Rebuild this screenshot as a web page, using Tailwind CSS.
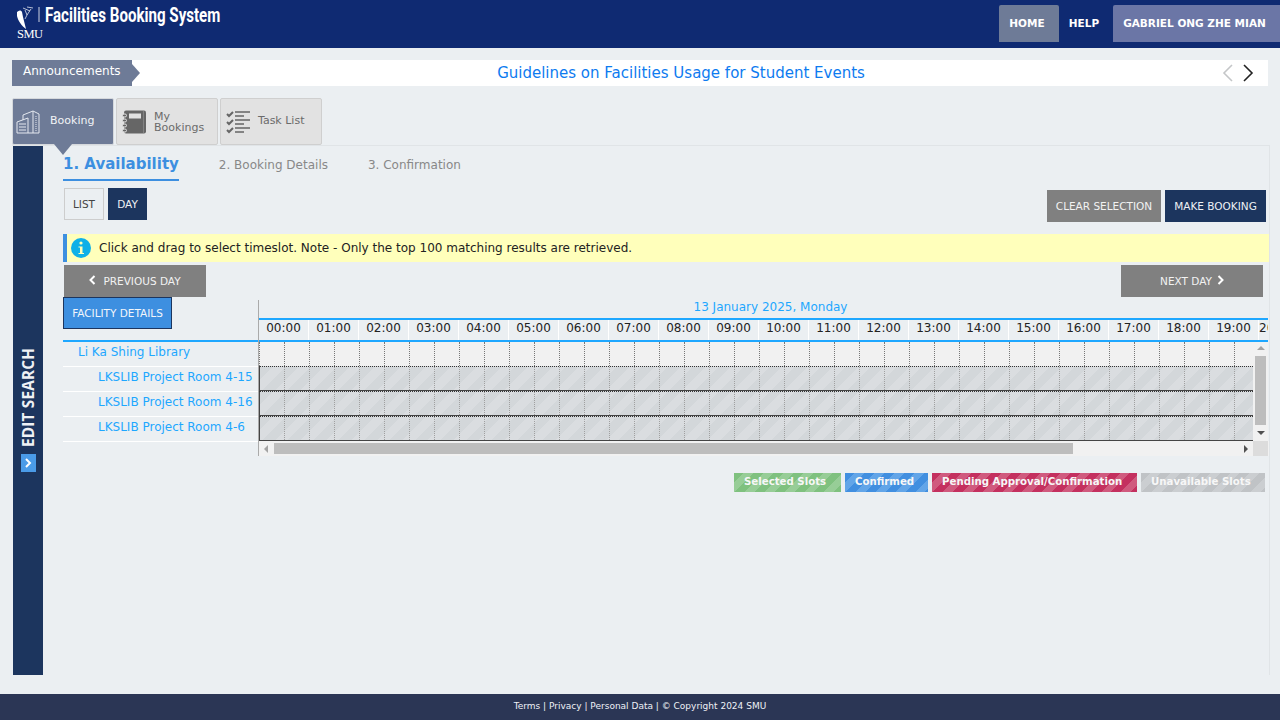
<!DOCTYPE html>
<html lang="en">

<head>
  <meta charset="UTF-8" />
  <title>Facilities Booking System</title>
  <script src="https://cdn.jsdelivr.net/npm/@tailwindcss/browser@4"></script>
</head>

<body class="bg-[#ebeff2] h-screen w-[1280px] overflow-hidden flex flex-col font-['DejaVu_Sans',sans-serif] text-[12px] text-[#222]">

  <!-- header -->
  <header class="h-12 shrink-0 bg-[#0f2a72] flex justify-between">
    <div class="relative w-[240px] text-white">
      <svg class="absolute left-[16px] top-[6px]" width="26" height="24" viewBox="0 0 26 24" fill="none">
        <path d="M1 6 C3 4 5 4 6 6 L7 11 C8 15 9 19 10 23 C6 20 2 15 1 10 Z" fill="#fff" />
        <path d="M9 4 L11 9 L15 3 M7 2 L14 5 M11 1 L17 2 M11 9 L9 13" stroke="#fff" stroke-width="0.7" />
        <path d="M23 1 V16" stroke="#fff" stroke-width="0.8" />
      </svg>
      <span class="absolute left-[17px] top-[27px] font-['Liberation_Serif',serif] text-[12.5px] leading-[14px] tracking-[-0.5px]">SMU</span>
      <span class="absolute left-[45px] top-[3px] origin-left scale-x-[0.755] whitespace-nowrap font-['Roboto',sans-serif] font-bold text-[20px] leading-6">Facilities Booking System</span>
    </div>
    <nav class="flex items-start pt-[5px] text-white font-bold text-[10.5px]">
      <a class="h-[37px] w-[60px] pr-[4px] flex items-center justify-center bg-[#6e7b97] rounded-t-[2px]">HOME</a>
      <a class="h-[37px] w-[54px] pr-[4px] flex items-center justify-center">HELP</a>
      <a class="h-[37px] w-[167px] pr-[4px] flex items-center justify-center bg-[#6b76a6] rounded-tl-[2px]">GABRIEL ONG ZHE MIAN</a>
    </nav>
  </header>

  <div class="flex-1 min-h-0 pt-3 pl-3 pr-3 flex flex-col">
    <!-- announcements -->
    <div class="h-[26px] w-[1256px] shrink-0 bg-white flex items-center relative">
      <div class="relative w-[120px] h-full bg-[#6e7b97] text-white text-[12px] pl-[11px] pt-[2px] leading-[18px]">
        Announcements
        <span class="absolute left-full top-[4px] w-0 h-0 border-y-[9px] border-y-transparent border-l-[8px] border-l-[#6e7b97]"></span>
      </div>
      <a class="flex-1 text-center text-[15px] text-[#0d7bf0] pr-[38px]">Guidelines on Facilities Usage for Student Events</a>
      <svg class="absolute left-[1210px] top-[4px]" width="12" height="18" viewBox="0 0 12 18" fill="none" stroke="#c4c6c8" stroke-width="1.6"><path d="M10 1 L2 9 L10 17" /></svg>
      <svg class="absolute left-[1230px] top-[4px]" width="12" height="18" viewBox="0 0 12 18" fill="none" stroke="#222" stroke-width="1.6"><path d="M2 1 L10 9 L2 17" /></svg>
    </div>

    <!-- tabs -->
    <div class="mt-3 h-[47px] shrink-0 flex gap-[2px] relative z-10 text-[11px] leading-[12px]">
      <a class="relative w-[102px] bg-[#6e7b97] text-[#f1f3f6] border border-[#d5d8dc] rounded-[2px] flex items-center pl-[3px]">
        <svg width="24" height="24" viewBox="0 0 24 24" fill="none" stroke="#e4e8ef" stroke-width="1">
          <path d="M1 23 V12 L12 8 V23 M7 10 V5 L17 1 L23 4 V23 H1 M17 1 V23 M3 14 H10 M3 17 H10 M3 20 H10" />
          <path d="M20 6 V21" stroke-dasharray="1 1" />
        </svg>
        <span class="ml-[10px] mb-[2px]">Booking</span>
        <span class="absolute left-[41px] top-[45px] w-0 h-0 border-x-[9px] border-x-transparent border-t-[11px] border-t-[#6e7b97]"></span>
      </a>
      <a class="w-[102px] bg-[#e2e2e2] text-[#6b6b6b] border border-[#cfcfcf] rounded-[2px] flex items-center pl-[5px]">
        <svg width="25" height="24" viewBox="0 0 25 24">
          <rect x="2" y="0.5" width="22" height="23" rx="2" fill="#666" />
          <rect x="7" y="3.5" width="12" height="5" fill="#e2e2e2" />
          <path d="M21.5 1 V23" stroke="#8a8a8a" stroke-width="0.8" />
          <g fill="#666" stroke="#e2e2e2" stroke-width="1">
            <rect x="0.5" y="4" width="4" height="3" rx="1.5" />
            <rect x="0.5" y="9" width="4" height="3" rx="1.5" />
            <rect x="0.5" y="14" width="4" height="3" rx="1.5" />
            <rect x="0.5" y="19" width="4" height="3" rx="1.5" />
          </g>
        </svg>
        <span class="ml-[7px] leading-[11px]">My<br />Bookings</span>
      </a>
      <a class="w-[102px] bg-[#e2e2e2] text-[#6b6b6b] border border-[#cfcfcf] rounded-[2px] flex items-center pl-[5px]">
        <svg width="25" height="24" viewBox="0 0 25 24" fill="none" stroke="#666">
          <path d="M1 4 L3 6 L7 2 M1 12 L3 14 L7 10 M1 20 L3 22 L7 18" stroke-width="2" />
          <path d="M9 2 H24 M9 6 H18 M9 10 H24 M9 14 H18 M9 18 H24 M9 22 H18" stroke-width="1.6" />
        </svg>
        <span class="ml-[7px] mb-[2px]">Task List</span>
      </a>
    </div>

    <!-- body -->
    <div class="h-[530px] w-[1258px] shrink-0 flex border-t border-r border-[#e0e4e7]">
      <aside class="ml-[1px] w-[30px] shrink-0 bg-[#1c355e] flex flex-col items-center pt-[201px]">
        <span class="[writing-mode:vertical-rl] rotate-180 font-['Open_Sans',sans-serif] font-bold text-[15.3px] leading-[16px] h-[100px] tracking-[0.2px] text-[#eef1f5] whitespace-nowrap">EDIT SEARCH</span>
        <span class="mt-[7px] w-[15px] h-[18px] bg-[#4a9be8] flex items-center justify-center">
          <svg width="8" height="10" viewBox="0 0 8 10" fill="none" stroke="#fff" stroke-width="2"><path d="M2 1 L6 5 L2 9" /></svg>
        </span>
      </aside>

      <main class="w-[1206px] ml-[20px] min-w-0">
        <!-- steps -->
        <div class="h-[35px] flex items-start text-[#888]">
          <div class="h-[35px] border-b-2 border-[#3d8fe0] text-[#3d8fe0] font-bold text-[15px] leading-[36px]">1. Availability</div>
          <div class="ml-[40px] leading-[38px]">2. Booking Details</div>
          <div class="ml-[40px] leading-[38px]">3. Confirmation</div>
        </div>

        <!-- view switch and actions -->
        <div class="mt-[7px] h-[34px] pl-[1px] pr-[3px] flex justify-between text-[10.5px]">
          <div class="flex gap-[4px] h-[32px]">
            <button class="w-[40px] pt-[2px] border border-[#cdcdcd] text-[#444]">LIST</button>
            <button class="w-[39px] pt-[2px] bg-[#1c355e] text-[#eef1f5]">DAY</button>
          </div>
          <div class="flex gap-[4px] mt-[2px] h-[32px]">
            <button class="w-[114px] pt-[2px] bg-[#808080] text-[#f2f2f2]">CLEAR SELECTION</button>
            <button class="w-[101px] pt-[2px] bg-[#1c355e] text-[#eef1f5]">MAKE BOOKING</button>
          </div>
        </div>

        <!-- hint -->
        <div class="mt-[12px] h-[28px] bg-[#ffffbb] border-l-4 border-[#3d8fe0] flex items-center text-[12px] text-[#222]">
          <svg class="ml-[4px]" width="20" height="20" viewBox="0 0 20 20">
            <circle cx="10" cy="10" r="10" fill="#0fb0e8" />
            <circle cx="10" cy="5" r="1.6" fill="#ffffbb" />
            <path d="M7.5 8.5 H11.5 V15 H13 V16 H7.5 V15 H9 V9.5 H7.5 Z" fill="#ffffbb" />
          </svg>
          <span class="ml-[8px]">Click and drag to select timeslot. Note - Only the top 100 matching results are retrieved.</span>
        </div>

        <!-- day nav -->
        <div class="mt-[3px] h-[32px] pl-[1px] pr-[6px] flex justify-between text-[10.5px] text-[#f2f2f2]">
          <button class="w-[142px] h-[32px] pt-[2px] bg-[#808080] flex items-center justify-center gap-[7px]">
            <svg width="7" height="10" viewBox="0 0 7 10" fill="none" stroke="#fff" stroke-width="2" class="-mt-[4px]"><path d="M5.5 1 L1.5 5 L5.5 9" /></svg>
            PREVIOUS DAY
          </button>
          <button class="w-[142px] h-[32px] pt-[2px] bg-[#808080] flex items-center justify-center gap-[5px]">
            NEXT DAY
            <svg width="7" height="10" viewBox="0 0 7 10" fill="none" stroke="#fff" stroke-width="2" class="-mt-[4px]"><path d="M1.5 1 L5.5 5 L1.5 9" /></svg>
          </button>
        </div>

        <!-- schedule -->
        <div class="flex">
          <div class="w-[195px] shrink-0 text-[#1ea7ff]">
            <div class="h-[45px] border-b-2 border-[#1ea7ff]">
              <button class="w-[109px] h-[32px] pt-[2px] bg-[#3d8fe0] border border-[#1c355e] text-[#f2f6fb] text-[10.5px]">FACILITY DETAILS</button>
            </div>
            <div class="h-[25px] border-b border-white pl-[15px] leading-[20px]">Li Ka Shing Library</div>
            <div class="h-[25px] border-b border-white pl-[35px] leading-[20px]">LKSLIB Project Room 4-15</div>
            <div class="h-[25px] border-b border-white pl-[35px] leading-[20px]">LKSLIB Project Room 4-16</div>
            <div class="h-[25px] border-b border-white pl-[35px] leading-[20px]">LKSLIB Project Room 4-6</div>
          </div>

          <div class="mt-[3px] w-[1011px] h-[156px] border-l border-[#aaa] overflow-hidden relative">
            <div class="h-[18px] text-center text-[#1ea7ff] leading-[15px] pl-[13px]">13 January 2025, Monday</div>
            <div id="hours" class="h-[24px] border-y-2 border-[#1ea7ff] flex w-[1009px] overflow-hidden"></div>
            <div id="rows" class="h-[99px]"></div>
            <!-- horizontal scrollbar -->
            <div class="h-[15px] bg-[#f1f1f1] flex items-center">
              <span class="ml-[5px] w-0 h-0 border-y-[4px] border-y-transparent border-r-[4px] border-r-[#a3a3a3]"></span>
              <span class="ml-[6px] w-[799px] h-[11px] bg-[#bdbdbd]"></span>
              <span class="ml-[171px] w-0 h-0 border-y-[4px] border-y-transparent border-l-[4px] border-l-[#505050]"></span>
              <span class="ml-[5px] w-[15px] h-[15px] bg-[#dcdcdc]"></span>
            </div>
            <!-- vertical scrollbar -->
            <div class="absolute left-[994px] top-[42px] w-[15px] h-[99px] bg-[#f1f1f1] flex flex-col items-center">
              <span class="mt-[4px] w-0 h-0 border-x-[4px] border-x-transparent border-b-[4px] border-b-[#a3a3a3]"></span>
              <span class="mt-[6px] w-[11px] h-[69px] bg-[#bdbdbd]"></span>
              <span class="mt-[6px] w-0 h-0 border-x-[4px] border-x-transparent border-t-[4px] border-t-[#505050]"></span>
            </div>
          </div>
        </div>

        <!-- legend -->
        <div class="mt-[17px] pr-[4px] flex justify-end gap-[4px] text-[10.2px] font-bold text-[#f7f7f7]">
          <span class="w-[107px] h-[19px] pl-[10px] leading-[18px] bg-[repeating-linear-gradient(135deg,#7fc17f_0,#7fc17f_7px,#97cd97_7px,#97cd97_14px)]">Selected Slots</span>
          <span class="w-[83px] h-[19px] pl-[10px] leading-[18px] bg-[repeating-linear-gradient(135deg,#418fe0_0,#418fe0_7px,#62a5e8_7px,#62a5e8_14px)]">Confirmed</span>
          <span class="w-[205px] h-[19px] pl-[10px] leading-[18px] bg-[repeating-linear-gradient(135deg,#c4305f_0,#c4305f_7px,#d05a7e_7px,#d05a7e_14px)]">Pending Approval/Confirmation</span>
          <span class="w-[124px] h-[19px] pl-[10px] leading-[18px] bg-[repeating-linear-gradient(135deg,#c0c3c6_0,#c0c3c6_7px,#cbced1_7px,#cbced1_14px)]">Unavailable Slots</span>
        </div>
      </main>
    </div>
  </div>

  <footer class="h-[26px] shrink-0 bg-[#2b3655] text-[#eef1f5] text-[9px] flex items-center justify-center">
    Terms | Privacy | Personal Data | © Copyright 2024 SMU
  </footer>

  <script>
    const hoursEl = document.getElementById("hours");
    const rowsEl = document.getElementById("rows");

    for (let h = 0; h < 21; h++) {
      const cell = document.createElement("div");
      // last column is squeezed by the scroll area, text stays left aligned
      cell.className = h < 20
        ? "w-[50px] shrink-0 border-r border-white text-center leading-[16px] text-[#222] whitespace-nowrap"
        : "w-[9px] shrink-0 overflow-hidden leading-[16px] text-[#222] whitespace-nowrap";
      cell.textContent = String(h).padStart(2, "0") + ":00";
      hoursEl.appendChild(cell);
    }

    function makeRow(booked) {
      const row = document.createElement("div");
      row.className = booked
        ? "w-[994px] h-[25px] flex overflow-hidden border-l border-t border-b border-l-[#444] border-t-[#333] border-b-[#444] [border-top-style:dotted] bg-[repeating-linear-gradient(135deg,#d3d7da_0,#d3d7da_9px,#dadde0_9px,#dadde0_18px)]"
        : "w-[994px] h-[24px] flex overflow-hidden border-l border-dotted border-[#777] bg-[#f1f1f1]";
      for (let i = 0; i < 40; i++) {
        const slot = document.createElement("div");
        slot.className = booked
          ? "w-[25px] shrink-0 border-r border-dotted border-[#a0a0a0]"
          : "w-[25px] shrink-0 border-r border-dotted border-[#777]";
        row.appendChild(slot);
      }
      rowsEl.appendChild(row);
    }

    makeRow(false);
    makeRow(true);
    makeRow(true);
    makeRow(true);
  </script>
</body>

</html>
